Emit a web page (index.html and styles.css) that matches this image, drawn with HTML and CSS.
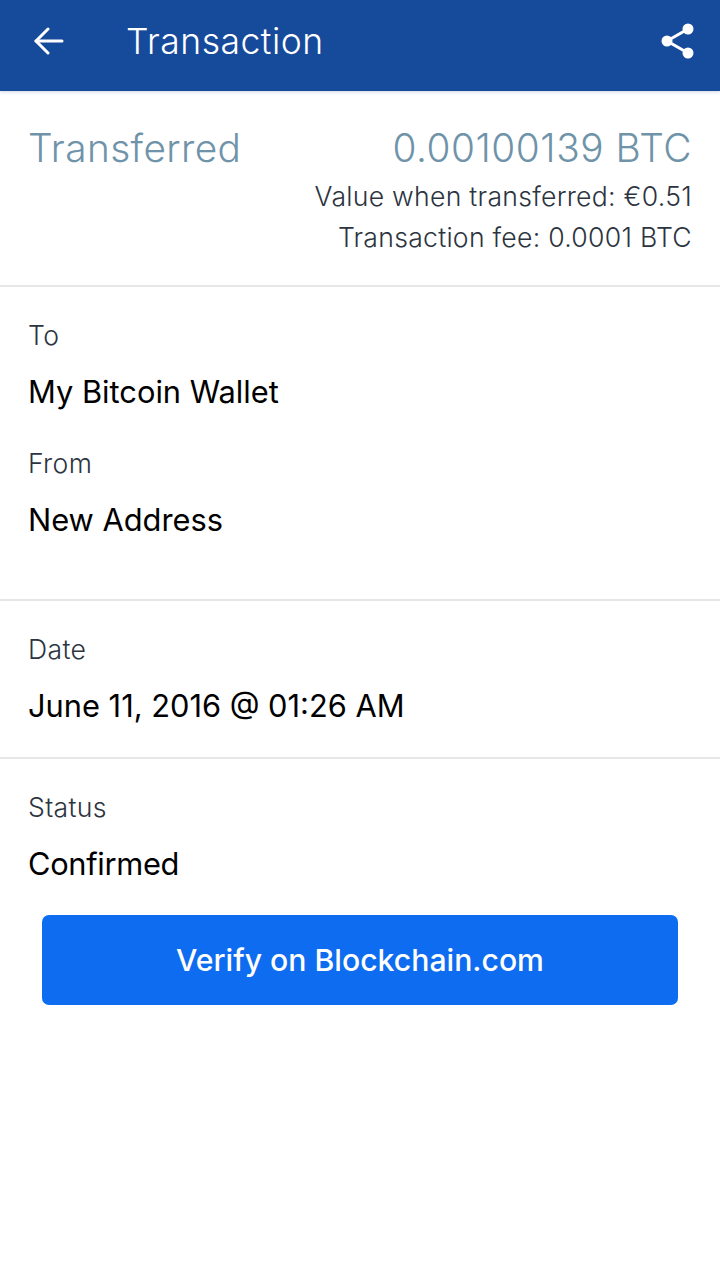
FILE: index.html
```html
<!DOCTYPE html>
<html lang="en">
<head>
  <meta charset="UTF-8">
  <meta name="viewport" content="width=device-width, initial-scale=1">
  <title>Transaction</title>
  <link rel="stylesheet" href="styles.css">
</head>
<body>

  <header class="topbar">
    <svg class="back-icon" width="30" height="28" viewBox="0 0 30 28" fill="none" stroke="#fff" stroke-width="3" stroke-linecap="round" stroke-linejoin="round">
      <path d="M2 14H28"/>
      <path d="M14 2L2 14L14 26"/>
    </svg>
    <h1 class="title">Transaction</h1>
    <svg class="share-icon" width="34" height="38" viewBox="0 0 34 38" fill="#fff">
      <path d="M27 7L6 19L27 31" fill="none" stroke="#fff" stroke-width="3"/>
      <circle cx="27" cy="7" r="5.5"/>
      <circle cx="6" cy="19" r="5.5"/>
      <circle cx="27" cy="31" r="5.5"/>
    </svg>
  </header>

  <section class="summary">
    <div class="summary-top">
      <div class="kind">Transferred</div>
      <div class="amount">0.00100139 BTC</div>
    </div>
    <div class="sub-line first">Value when transferred: €0.51</div>
    <div class="sub-line second">Transaction fee: 0.0001 BTC</div>
  </section>

  <section class="block parties">
    <div class="label">To</div>
    <div class="value">My Bitcoin Wallet</div>
    <div class="label">From</div>
    <div class="value">New Address</div>
  </section>

  <section class="block date">
    <div class="label">Date</div>
    <div class="value">June 11, 2016 @ 01:26 AM</div>
  </section>

  <section class="status">
    <div class="label">Status</div>
    <div class="value">Confirmed</div>
  </section>

  <button class="verify-btn">Verify on Blockchain.com</button>

</body>
</html>
```

FILE: styles.css
```css
* {
  margin: 0;
  padding: 0;
  box-sizing: border-box;
}
body {
  background: #fff;
  color: #000;
  font-family: Inter, "Noto Sans", sans-serif;
}
.topbar {
  height: 91px;
  background: #164a9b;
  display: flex;
  align-items: center;
  padding: 0 25px 9px 34px;
  box-shadow: 0 1px 3px rgba(60, 90, 130, 0.25);
}
.title {
  flex: 1;
  margin-left: 62px;
  color: #fff;
  font-size: 35.5px;
  font-weight: 350;
  letter-spacing: 0.5px;
}
.summary {
  height: 196px;
  padding: 33px 28px 0;
  border-bottom: 2px solid #e4e6e8;
  color: #2c3440;
}
.summary-top {
  display: flex;
  justify-content: space-between;
  align-items: center;
  color: #6f93a9;
  font-size: 38.8px;
  font-weight: 350;
}
.kind {
  letter-spacing: 0.4px;
}
.amount {
  letter-spacing: 0.55px;
}
.sub-line {
  text-align: right;
  font-size: 26.6px;
  font-weight: 350;
  letter-spacing: 0.27px;
  line-height: 40px;
}
.sub-line.first {
  margin-top: 5px;
}
.sub-line.second {
  margin-top: 1px;
}
.block {
  border-bottom: 2px solid #e4e6e8;
  padding: 0 28px;
}
.parties {
  height: 314px;
  padding-top: 29px;
}
.date {
  height: 158px;
  padding-top: 29px;
}
.status {
  padding: 29px 28px 0;
}
.label {
  color: #2c3440;
  font-size: 26.6px;
  font-weight: 350;
  letter-spacing: 0.35px;
  line-height: 38px;
}
.value {
  font-size: 30.8px;
  font-weight: 380;
  line-height: 36px;
  margin-top: 20px;
  margin-bottom: 34px;
}
.status .value {
  margin-bottom: 0;
  letter-spacing: -0.3px;
}
.verify-btn {
  display: block;
  width: 636px;
  height: 90px;
  margin: 33px auto 0;
  background: #0e6cf0;
  border: none;
  border-radius: 7px;
  color: #fff;
  font-family: inherit;
  font-size: 30.2px;
  font-weight: 480;
}
```
